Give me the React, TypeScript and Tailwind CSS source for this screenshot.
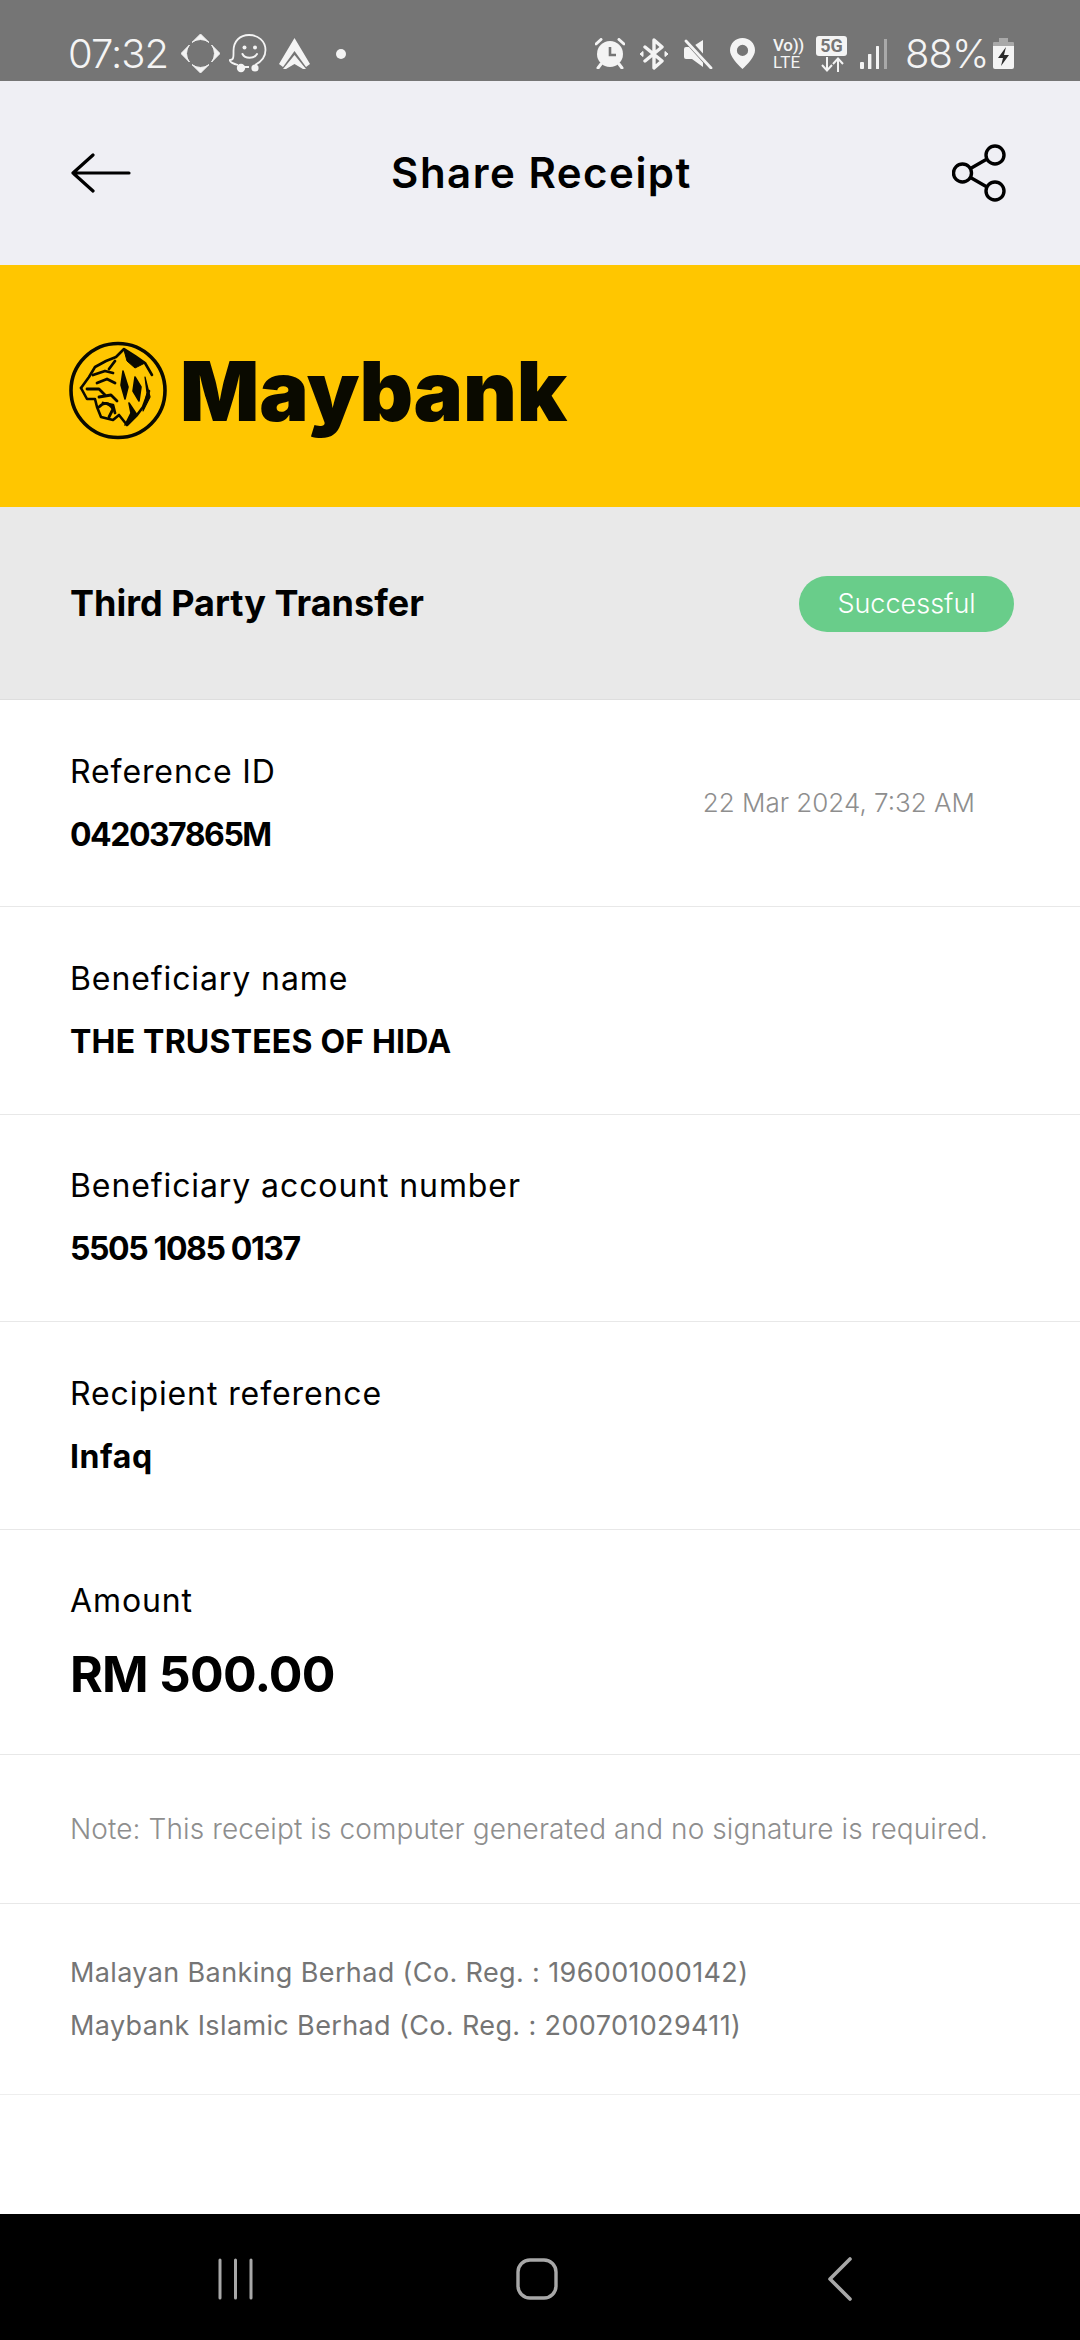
const font = "font-['Inter','Liberation_Sans',sans-serif]";

function Tiger() {
  return (
    <svg width="98" height="99" viewBox="0 0 98 99" fill="none" stroke="#0a0a00" strokeLinecap="round" strokeLinejoin="round">
      <circle cx="49" cy="49.5" r="47" strokeWidth="3.6" />
      <path d="M12 47 L20 36 L26 26 L37 20 L47 16 L55 8 L66 15 L76 22 L83 34" strokeWidth="2.6" />
      <path d="M12 47 L18 58 L26 58 L28 66 L32 76 L44 79 L50 74 L58 84 L68 74 L74 66 L80 50" strokeWidth="2.6" />
      <path d="M55 9 L58 20 L66 27 L72 24 L76 22 Z" fill="#0a0a00" strokeWidth="1" />
      <path d="M54 30 L52 44 L56 58 L59 46 Z" fill="#0a0a00" strokeWidth="1.6" />
      <path d="M66 36 L64 50 L70 60 L72 46 Z" fill="#0a0a00" strokeWidth="1.6" />
      <path d="M76 36 L78 52 L74 70 L81 56 Z" fill="#0a0a00" strokeWidth="1.2" />
      <path d="M60 62 L62 72 L56 84 L68 74 Z" fill="#0a0a00" strokeWidth="1.6" />
      <path d="M24 34 L36 30 L44 32 M28 42 L38 38 L46 42 M18 48 L30 48 L36 54 M30 56 L42 54 L48 60 M34 62 L44 64 L46 72 M46 20 L40 28" strokeWidth="2.8" />
      <path d="M30 66 Q38 58 44 68 L40 76" strokeWidth="2.8" />
    </svg>
  );
}

function Diamond() {
  const p = "M19.5 0 L28 8.4 A14 14 0 0 0 11 8.4 Z";
  return (
    <svg width="39" height="39" viewBox="0 0 39 39" fill="#f4f4f4" stroke="#f4f4f4" strokeWidth="1" strokeLinejoin="round" className="ml-[14px]">
      <path d={p} />
      <path d={p} transform="rotate(90 19.5 19.5)" />
      <path d={p} transform="rotate(180 19.5 19.5)" />
      <path d={p} transform="rotate(270 19.5 19.5)" />
    </svg>
  );
}

function Waze() {
  return (
    <svg width="39" height="39" viewBox="0 0 39 39" fill="none" stroke="#f4f4f4" className="ml-[8px]">
      <path d="M10 31 C6 30 1 28 2 26 C6 26 5.5 22 5.5 17 C5.5 7 12 1 21 1 C30 1 37.5 7 37.5 16 C37.5 23 33 28 27 31 M21 33 H16" strokeWidth="1.8" />
      <circle cx="13" cy="34" r="4.2" fill="#f4f4f4" stroke="none" />
      <circle cx="27" cy="34" r="3.6" fill="#f4f4f4" stroke="none" />
      <circle cx="16.5" cy="13.5" r="2" fill="#f4f4f4" stroke="none" />
      <circle cx="27" cy="13.5" r="2" fill="#f4f4f4" stroke="none" />
      <path d="M14.5 20 C17 25 26 25 29 20" strokeWidth="2" strokeLinecap="round" />
    </svg>
  );
}

function Auto() {
  return (
    <svg width="31" height="32" viewBox="0 0 31 32" fill="#f4f4f4" className="ml-[12px]">
      <path d="M15.5 0 L31 26 L27 29 L15.5 13 L4 29 L0 26 Z" strokeLinejoin="round" />
      <path d="M15.5 17 L27 31 H24 L15.5 26 L7 31 H4 Z" />
    </svg>
  );
}

function Alarm() {
  return (
    <svg width="30" height="31" viewBox="0 0 30 31" fill="#f4f4f4">
      <circle cx="15" cy="16" r="13" />
      <path d="M1 6 L6 1.5 M29 6 L24 1.5 M6 26 L3 30 M24 26 L27 30" stroke="#f4f4f4" strokeWidth="3" strokeLinecap="round" />
      <path d="M15 9 V17 H21" fill="none" stroke="#757575" strokeWidth="2.6" />
    </svg>
  );
}

function Bluetooth() {
  return (
    <svg width="28" height="32" viewBox="0 0 28 32" fill="none" stroke="#f4f4f4" strokeWidth="3.4" className="ml-[15px]">
      <path d="M5 9 L22 23 L14 30 V2 L22 9 L5 23" strokeLinejoin="round" strokeLinecap="round" />
      <path d="M0 16 L3 13.5 V18.5 Z M28 16 L25 13.5 V18.5 Z" fill="#f4f4f4" strokeWidth="1" />
    </svg>
  );
}

function Mute() {
  return (
    <svg width="29" height="30" viewBox="0 0 29 30" fill="#f4f4f4" className="ml-[16px]">
      <path d="M19 1 L8 8 H2 A2 2 0 0 0 0 10 V18 A2 2 0 0 0 2 20 H8 L19 28 Z" />
      <path d="M1 -1 L27 28" stroke="#757575" strokeWidth="6" />
      <path d="M2 2 L27 29" stroke="#f4f4f4" strokeWidth="2.8" strokeLinecap="round" />
    </svg>
  );
}

function Pin() {
  return (
    <svg width="25" height="31" viewBox="0 0 25 31" className="ml-[17px]">
      <path fillRule="evenodd" fill="#f4f4f4" d="M12.5 0 C19.5 0 25 5.4 25 12.3 C25 18.5 18 26 12.5 31 C7 26 0 18.5 0 12.3 C0 5.4 5.5 0 12.5 0 Z M12.5 6.8 A5.6 5.6 0 1 0 12.5 18 A5.6 5.6 0 1 0 12.5 6.8 Z" />
    </svg>
  );
}

function StatusText({ children, cls }: { children: React.ReactNode; cls: string }) {
  return <span className={`text-[#f4f4f4] ${cls}`}>{children}</span>;
}

function Signal() {
  return (
    <svg width="28" height="30" viewBox="0 0 28 30" className="ml-[13px]">
      <rect x="0" y="23" width="4" height="7" rx="1" fill="#f4f4f4" />
      <rect x="8" y="15" width="3.4" height="15" rx="0.5" fill="#f4f4f4" />
      <rect x="16" y="7" width="3" height="23" rx="0.5" fill="#f4f4f4" />
      <rect x="24" y="0" width="3" height="30" fill="#a9a9a9" />
    </svg>
  );
}

function Battery() {
  return (
    <svg width="21" height="31" viewBox="0 0 21 31" className="ml-[7px]">
      <path d="M6 0 H15 V4 H20 A1 1 0 0 1 21 5 V8 H0 V5 A1 1 0 0 1 1 4 H6 Z" fill="#a9a9a9" />
      <path d="M0 8 H21 V29 A2 2 0 0 1 19 31 H2 A2 2 0 0 1 0 29 Z" fill="#f4f4f4" />
      <path d="M13 9 L5 20 H10 L8 28 L16 17 H11 Z" fill="#2b2b2b" />
    </svg>
  );
}

function Arrows() {
  return (
    <svg width="24" height="15" viewBox="0 0 24 15" fill="none" stroke="#f4f4f4" strokeWidth="2">
      <path d="M7 0 V13 M2 8 L7 13.5 L12 8 M18 15 V2 M13 7 L18 1.5 L23 7" />
    </svg>
  );
}

function StatusBar() {
  return (
    <div className="h-[81px] bg-[#757575] flex items-center pt-[26px] pl-[68px] shrink-0">
      <StatusText cls="text-[40px] leading-[40px] font-light w-[99px] tracking-[-1px]">07:32</StatusText>
      <Diamond />
      <Waze />
      <Auto />
      <div className="w-[10px] h-[10px] rounded-full bg-[#f4f4f4] ml-[26px] mr-[249px]" />
      <Alarm />
      <Bluetooth />
      <Mute />
      <Pin />
      <div className="flex flex-col items-start ml-[18px] w-[33px]">
        <StatusText cls="font-['Roboto',sans-serif] text-[17px] leading-[17px] font-medium tracking-[-0.3px]">Vo))</StatusText>
        <StatusText cls="font-['Roboto',sans-serif] text-[17px] leading-[17px] tracking-[0.3px]">LTE</StatusText>
      </div>
      <div className="flex flex-col items-center ml-[10px] w-[31px] gap-[1px]">
        <div className="w-[31px] h-[20px] rounded-[3px] bg-[#f4f4f4] flex items-center justify-center font-['Roboto',sans-serif] text-[18px] leading-[20px] font-bold text-[#757575]">5G</div>
        <Arrows />
      </div>
      <Signal />
      <StatusText cls="ml-[17px] w-[81px] text-[40px] leading-[40px] font-light tracking-[-1px] whitespace-nowrap">88%</StatusText>
      <Battery />
    </div>
  );
}

function Header() {
  return (
    <div className="h-[184px] bg-[#efeff4] shrink-0 flex items-center justify-between pl-[71px] pr-[74px]">
      <svg width="60" height="40" viewBox="0 0 60 40" fill="none" stroke="#000" strokeWidth="3.2" strokeLinecap="round" strokeLinejoin="round">
        <path d="M2 20 H58 M22 2 L2 20 L22 38" />
      </svg>
      <h1 className="text-[42px] leading-[48px] font-semibold text-black tracking-[1.5px]">Share Receipt</h1>
      <svg width="54" height="58" viewBox="0 0 54 58" fill="none" stroke="#000" strokeWidth="3.4">
        <circle cx="43" cy="11" r="9" />
        <circle cx="43" cy="47" r="9" />
        <circle cx="10.5" cy="29" r="9" />
        <path d="M18.5 24.5 L35 15 M18.5 33.5 L35 43" />
      </svg>
    </div>
  );
}

function Row({ label, value, date, valueCls, h }: { label: string; value: string; date?: string; valueCls: string; h: string }) {
  return (
    <div className={`${h} border-b border-[#e8e8e8] pl-[70px] pr-[105px] flex items-center justify-between shrink-0`}>
      <div className="flex flex-col gap-[23px]">
        <div className="text-[32px] leading-[40px] text-black tracking-[0.9px]">{label}</div>
        <div className={`text-[32px] leading-[40px] font-bold text-black ${valueCls}`}>{value}</div>
      </div>
      {date && <div className="text-[26px] leading-[36px] font-light text-[#8e8e8e]">{date}</div>}
    </div>
  );
}

export default function App() {
  return (
    <div className={`w-[1080px] h-[2340px] flex flex-col bg-white overflow-hidden ${font}`}>
      <StatusBar />
      <Header />
      <div className="h-[242px] bg-[#ffc600] shrink-0 flex items-center pl-[69px] pt-[9px]">
        <Tiger />
        <span className="ml-[13px] text-[83px] leading-[90px] font-black text-[#0a0a00] tracking-[-0.2px]">Maybank</span>
      </div>
      <div className="h-[193px] bg-[#e9e9e9] border-b border-[#dedede] shrink-0 flex items-start pt-[69px] pl-[70px] pr-[66px] justify-between">
        <div className="h-[54px] flex items-center text-[36px] font-bold text-black">Third Party Transfer</div>
        <div className="w-[215px] h-[56px] rounded-full bg-[#69cd8a] text-white text-[27px] font-light flex items-center justify-center">Successful</div>
      </div>
      <Row h="h-[207px]" label="Reference ID" value="042037865M" date="22 Mar 2024, 7:32 AM" valueCls="tracking-[-1.5px]" />
      <Row h="h-[207.5px]" label="Beneficiary name" value="THE TRUSTEES OF HIDA" valueCls="tracking-[0.2px]" />
      <Row h="h-[207.5px]" label="Beneficiary account number" value="5505 1085 0137" valueCls="tracking-[-1.4px]" />
      <Row h="h-[207.5px]" label="Recipient reference" value="Infaq" valueCls="tracking-[0.6px]" />
      <div className="h-[225px] border-b border-[#e8e8e8] pl-[70px] pt-[51px] shrink-0 flex flex-col gap-[25px]">
        <div className="text-[32px] leading-[40px] text-black tracking-[0.9px]">Amount</div>
        <div className="text-[50px] leading-[56px] font-bold text-black tracking-[-0.8px]">RM 500.00</div>
      </div>
      <div className="h-[149px] border-b border-[#e8e8e8] pl-[70px] flex items-center shrink-0 text-[28px] font-light text-[#8e8e8e] tracking-[0.1px]">
        Note: This receipt is computer generated and no signature is required.
      </div>
      <div className="h-[191px] border-b border-[#eeeeee] pl-[70px] pt-[2px] flex flex-col justify-center gap-[17px] shrink-0 text-[27px] leading-[36px] text-[#757575] tracking-[0.37px]">
        <div>Malayan Banking Berhad (Co. Reg. : 196001000142)</div>
        <div>Maybank Islamic Berhad (Co. Reg. : 200701029411)</div>
      </div>
      <div className="flex-1" />
      <div className="h-[126px] bg-black shrink-0 flex items-center pt-[3px] pl-[218px]">
        <svg width="35" height="42" viewBox="0 0 35 42" stroke="#a8a8a8" strokeWidth="3" strokeLinecap="round">
          <path d="M2 2 V40 M17.5 2 V40 M33 2 V40" />
        </svg>
        <svg width="42" height="42" viewBox="0 0 42 42" fill="none" stroke="#a8a8a8" strokeWidth="3.4" className="ml-[263px]">
          <rect x="2" y="2" width="38" height="38" rx="12" />
        </svg>
        <svg width="26" height="44" viewBox="0 0 26 44" fill="none" stroke="#a8a8a8" strokeWidth="3.6" strokeLinecap="round" strokeLinejoin="round" className="ml-[269px]">
          <path d="M23 2 L3 22 L23 42" />
        </svg>
      </div>
    </div>
  );
}
